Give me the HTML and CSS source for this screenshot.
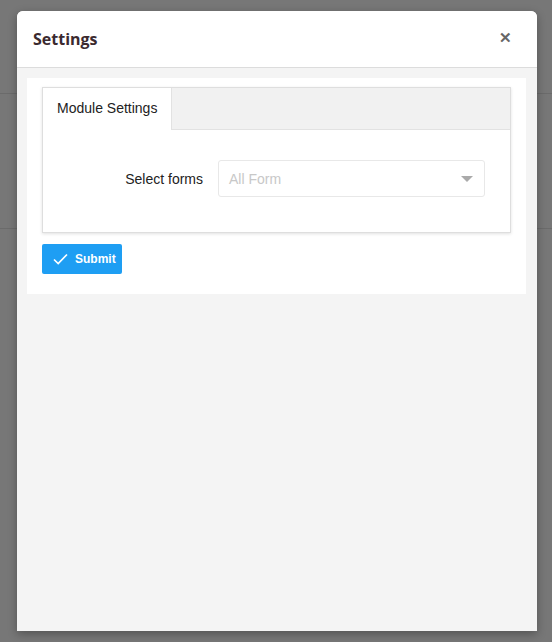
FILE: index.html
```html
<!DOCTYPE html>
<html lang="en">
<head>
  <meta charset="UTF-8" />
  <meta name="viewport" content="width=device-width, initial-scale=1.0"/>
  <title>Settings</title>
  <link rel="stylesheet" href="styles.css">
</head>
<body>

<!-- Modal -->
<div class="modal">
  <div class="modal-header">
    <h2 class="modal-title">Settings</h2>
    <span class="modal-close">&#x2715;</span>
  </div>

  <div class="modal-body">
    <div class="panel">
      <div class="tabs">
        <div class="tab-bar">
          <div class="tab active">Module Settings</div>
        </div>
        <div class="tab-content">
          <div class="form-row">
            <label class="form-label">Select forms</label>
            <div class="select">
              <span class="select-placeholder">All Form</span>
              <span class="select-caret"></span>
            </div>
          </div>
        </div>
      </div>

      <button class="submit-button">
        <svg width="15" height="12" viewBox="0 0 15 12"><path d="M1 6.5 L5.2 10.5 L14 1.5" fill="none" stroke="#fff" stroke-width="1.7"/></svg>
        Submit
      </button>
    </div>
  </div>
</div>

</body>
</html>
```

FILE: styles.css
```css
/* Page backdrop */
body {
  margin: 0;
  padding: 11px 0 0 17px;
  height: 642px;
  box-sizing: border-box;
  overflow: hidden;
  font-family: "Liberation Sans", Arial, sans-serif;
  background:
    linear-gradient(#6b6b6b, #6b6b6b) 0 93px / 100% 1px no-repeat,
    linear-gradient(#6b6b6b, #6b6b6b) 0 228px / 100% 1px no-repeat,
    #777;
}

/* Modal */
.modal {
  width: 520px;
  height: 620px;
  background: #f4f4f4;
  border-radius: 6px 6px 0 0;
  display: flex;
  flex-direction: column;
  box-shadow: 0 3px 10px rgba(0, 0, 0, 0.3);
}

.modal-header {
  height: 57px;
  flex-shrink: 0;
  background: #fff;
  border-radius: 6px 6px 0 0;
  border-bottom: 1px solid #dcdcdc;
  display: flex;
  align-items: center;
  justify-content: space-between;
  padding: 0 25px 0 16px;
  box-sizing: border-box;
}

.modal-title {
  margin: 0;
  font-family: "Open Sans", sans-serif;
  font-size: 16px;
  font-weight: bold;
  color: #3b2a2f;
}

.modal-close {
  color: #666;
  font-size: 15px;
  font-weight: bold;
  margin-top: -3px;
}

.modal-body {
  flex: 1;
  padding: 10px 11px 10px 10px;
}

/* White panel */
.panel {
  background: #fff;
  padding: 9px 15px 20px 15px;
}

/* Tabs */
.tabs {
  border: 1px solid #dedede;
  box-shadow: 0 1px 3px rgba(0, 0, 0, 0.12);
}

.tab-bar {
  background: #f1f1f1;
  height: 41px;
  border-bottom: 1px solid #e2e2e2;
  display: flex;
}

.tab {
  padding: 0 14px;
  line-height: 41px;
  font-size: 14px;
  color: #222;
}

.tab.active {
  background: #fff;
  height: 42px;
  border-right: 1px solid #e2e2e2;
}

.tab-content {
  padding: 30px 25px 35px 0;
}

.form-row {
  display: flex;
  align-items: center;
  gap: 15px;
}

.form-label {
  width: 160px;
  text-align: right;
  font-size: 14px;
  color: #222;
}

.select {
  flex: 1;
  height: 37px;
  box-sizing: border-box;
  border: 1px solid #e8e8e8;
  border-radius: 3px;
  display: flex;
  align-items: center;
  justify-content: space-between;
  padding: 0 11px 0 10px;
}

.select-placeholder {
  font-size: 14px;
  color: #c8c8c8;
}

.select-caret {
  width: 0;
  height: 0;
  border-left: 6px solid transparent;
  border-right: 6px solid transparent;
  border-top: 6px solid #aaa;
}

/* Button */
.submit-button {
  margin-top: 11px;
  width: 80px;
  height: 30px;
  background: #1e9ef3;
  border: none;
  border-radius: 2px;
  color: #fff;
  font-family: "Liberation Sans", Arial, sans-serif;
  font-size: 12px;
  font-weight: bold;
  display: flex;
  align-items: center;
  gap: 7px;
  padding: 0 0 0 11px;
  cursor: pointer;
}
```
